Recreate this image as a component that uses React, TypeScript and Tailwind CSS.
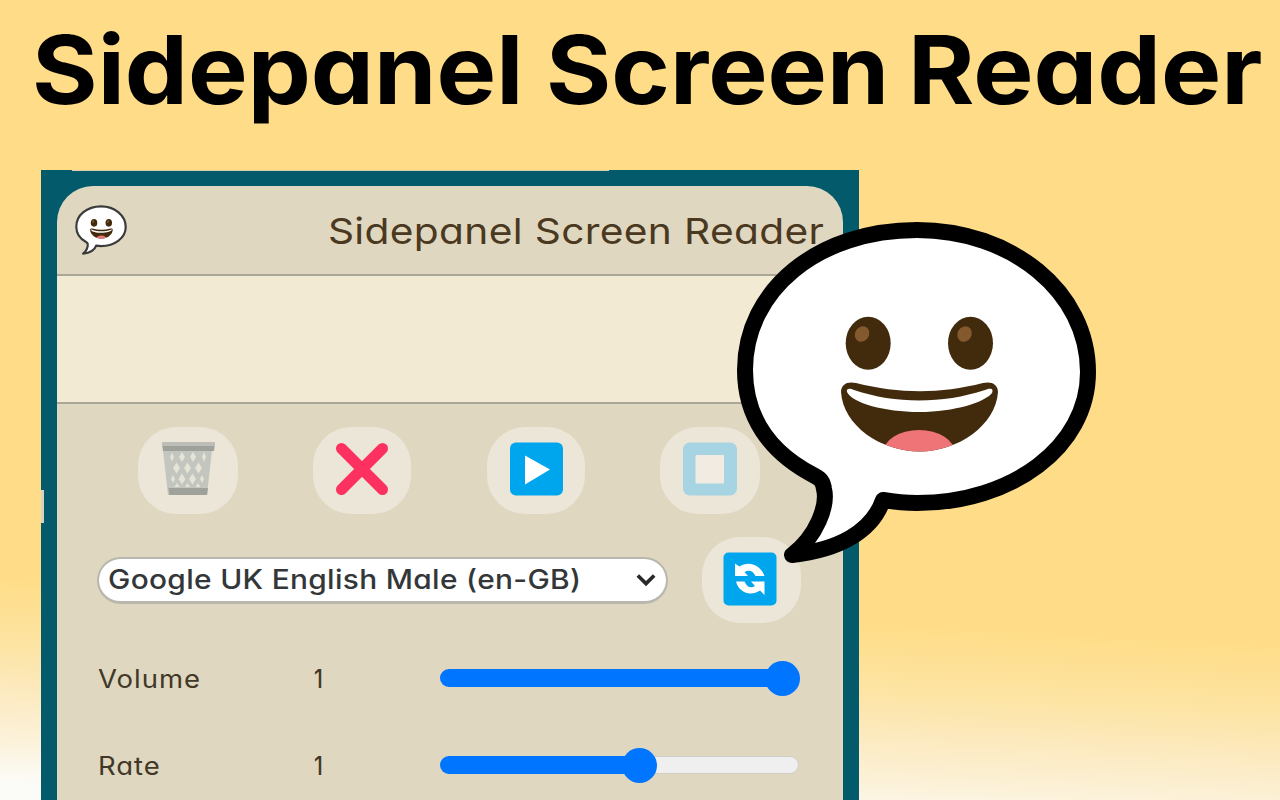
import React from "react";

function SpeechBubble({
  className,
  id,
  stroke = "#000",
  strokeWidth = 16,
}: {
  className: string;
  id: string;
  stroke?: string;
  strokeWidth?: number;
}) {
  const mouth =
    "M841 392C841 384 848 381 856 383C900 394 940 394 983 383C991 381 998 384 998 392C996 425 958 451.500 920 451.500C880 451.500 843 425 841 392Z";
  return (
    <svg className={className} viewBox="736 221 361 343" preserveAspectRatio="none" aria-hidden="true">
      <defs>
        <clipPath id={id}>
          <path d={mouth} />
        </clipPath>
      </defs>
      <path
        d="M745 370C745 290 818 230 917 230C1012 230 1088 292 1088 372C1088 447 1012 503 917 503C906 503 895 502 883 500C872 532 838 550 792 555C817 536 828 505 824 489C823 482 821 479 815 476C768 452 745 415 745 370Z"
        fill="#fff"
        stroke={stroke}
        strokeWidth={strokeWidth}
        strokeLinejoin="round"
      />
      <ellipse cx="868.200" cy="343.200" rx="22.500" ry="26.500" fill="#422b0d" />
      <ellipse cx="970.500" cy="343.200" rx="22.500" ry="26.500" fill="#422b0d" />
      <ellipse cx="862" cy="334" rx="7" ry="8" fill="#85592e" transform="rotate(30 862 334)" />
      <ellipse cx="964.500" cy="334" rx="7" ry="8" fill="#85592e" transform="rotate(30 964.500 334)" />
      <path d={mouth} fill="#422b0d" />
      <path
        d="M847 392C846 388 850 388 854 390C896 404 942 404 985 390C990 388 994 388 992 393C985 402 955 412 919 412C885 412 852 403 847 392Z"
        fill="#fff"
      />
      <ellipse cx="919" cy="453" rx="36" ry="23" fill="#ef7478" clipPath={`url(#${id})`} />
    </svg>
  );
}

function TrashIcon() {
  return (
    <svg className="h-[54px] w-[54px]" viewBox="0 0 54 54" aria-hidden="true">
      <path d="M2 8H51L46 53H7Z" fill="#c3c5bf" />
      <g fill="#e6e3d7">
        <path d="M11 10.500L13 15L11 19.500L9 15Z" />
        <path d="M21 10L24 15L21 20L18 15Z" />
        <path d="M32 10L35 15L32 20L29 15Z" />
        <path d="M43 10L45 15L43 20L41 15Z" />
        <path d="M15.500 20.500L19 26L15.500 31.500L12 26Z" />
        <path d="M26.500 20.500L30 26L26.500 31.500L23 26Z" />
        <path d="M37.500 20.500L41 26L37.500 31.500L34 26Z" />
        <path d="M21 31.500L24.500 37L21 42.500L17.500 37Z" />
        <path d="M31.500 31.500L35 37L31.500 42.500L28 37Z" />
        <path d="M41 33L43 37L41 41L39 37Z" />
        <path d="M12 33L14 37L12 41L10 37Z" />
        <path d="M16 41L18.500 45H13.500Z" />
        <path d="M26.500 41L29 45H24Z" />
        <path d="M37 41L39.500 45H34.500Z" />
      </g>
      <path d="M1 1H54L53 9H2Z" fill="#9fa19b" />
      <path d="M1 0H54V4H1Z" fill="#bcbeb7" />
      <path d="M7.500 46H47L46 53H8.500Z" fill="#9fa19b" />
    </svg>
  );
}

function CrossIcon() {
  return (
    <svg className="h-[54px] w-[54px]" viewBox="0 0 54 54" aria-hidden="true">
      <path d="M6.500 6.500L47.500 47.500M47.500 6.500L6.500 47.500" stroke="#fc3160" strokeWidth="11" strokeLinecap="round" />
    </svg>
  );
}

function PlayIcon() {
  return (
    <svg className="h-[54px] w-[54px]" viewBox="0 0 54 54" aria-hidden="true">
      <rect x="1" y="0.500" width="53" height="53" rx="6" fill="#00a6ed" />
      <path d="M16 13.500L41 27.500L16 42.500Z" fill="#fff" />
    </svg>
  );
}

function StopIcon() {
  return (
    <svg className="h-[54px] w-[54px]" viewBox="0 0 54 54" aria-hidden="true">
      <rect x="0" y="0.500" width="54" height="53" rx="7" fill="#a6d4e2" />
      <rect x="12.500" y="13" width="28.500" height="28.500" rx="1" fill="#f2ebe1" />
    </svg>
  );
}

function RefreshIcon() {
  return (
    <svg className="mr-[3px] mb-[2px] h-[54px] w-[54px]" viewBox="0 0 54 54" aria-hidden="true">
      <rect x="0.500" y="0.500" width="53" height="53" rx="5" fill="#00a6ed" />
      <path
        d="M12 11.500L16.500 14.500C25 9 37 12 41.500 24H32.500C30 18.500 26 17.500 21.500 20L25 24H12Z"
        fill="#fff"
      />
      <path
        d="M41.500 43L37 38.500C28 44.500 16 41 13 29.500H21.500C24 35.500 28 36.500 32 34L28 29.500H41.500Z"
        fill="#fff"
      />
    </svg>
  );
}

function IconButton({ children, label, className }: { children: React.ReactNode; label: string; className: string }) {
  return (
    <button aria-label={label} className={`flex items-center justify-center rounded-[38px] bg-[#ece6d9] ${className}`}>
      {children}
    </button>
  );
}

function SliderRow({ label, value, percent }: { label: string; value: string; percent: number }) {
  return (
    <div className="flex h-[87px] items-center pl-[41px] text-[25px] text-[#42382a]">
      <span className="w-[216px] pt-[4px]">
        <span className="inline-block origin-left scale-x-110 tracking-[0.9px]">{label}</span>
      </span>
      <span className="w-[126px] pt-[4px] font-medium">
        <span className="inline-block origin-left scale-x-[0.85]">{value}</span>
      </span>
      <div className="relative h-[18px] w-[359px] rounded-full border border-[#cfcdc5] bg-[#efefef]">
        <div className="absolute -inset-y-px -left-px rounded-full bg-[#0075ff]" style={{ width: percent }} />
        <div className="absolute -top-[9px] h-[35px] w-[35px] rounded-full bg-[#0075ff]" style={{ left: percent - 35 }} />
      </div>
    </div>
  );
}

export default function App() {
  return (
    <main className="relative flex h-[800px] w-[1280px] flex-col overflow-hidden bg-[linear-gradient(183deg,#ffdd88_74.500%,#fde4a3_82%,#fce9bd_87%,#fcf2da_93%,#fbfbf7_98%)] font-['Inter',sans-serif] [font-feature-settings:'cv11'_1]">
      <h1 className="flex h-[170px] shrink-0 pt-[13px] pl-[32px] text-[95px] leading-[114px] font-bold whitespace-nowrap text-black">
        <span className="w-[514px]">
          <span className="inline-block origin-left scale-x-[1.055]">Sidepanel</span>
        </span>
        <span className="w-[362px]">
          <span className="inline-block origin-left scale-x-[1.05]">Screen</span>
        </span>
        <span className="inline-block origin-left scale-x-[1.065]">Reader</span>
      </h1>

      <section className="relative ml-[41px] h-[630px] w-[818px] bg-[#025a6b] px-[16px] pt-[16px]">
        <div className="absolute top-0 left-[31px] h-px w-[537px] bg-[#d5cfae]" />
        <div className="absolute top-[320px] left-0 h-[33px] w-[3px] bg-[#d9d2c4]" />
        <div className="flex h-[614px] w-[786px] flex-col overflow-hidden rounded-t-[36px] bg-[#dfd7bf]">
          <header className="flex h-[90px] shrink-0 items-center justify-between border-b-2 border-[#aaa698] pr-[19px] pl-[18px]">
            <SpeechBubble id="mouth-small" className="h-[50px] w-[52px]" stroke="#3b3b3b" strokeWidth={15} />
            <h2 className="origin-right scale-x-[1.13] pt-[2px] text-[36px] tracking-[0.3px] whitespace-nowrap text-[#4b3820]">
              Sidepanel Screen Reader
            </h2>
          </header>
          <div className="h-[128px] shrink-0 border-b-2 border-[#aaa698] bg-[#f2ead3]" />

          <div className="flex shrink-0 pt-[23px] pl-[81px]">
            <IconButton label="Clear" className="mr-[75px] h-[87px] w-[100px] pb-[3px]">
              <TrashIcon />
            </IconButton>
            <IconButton label="Cancel" className="mr-[76px] h-[87px] w-[98px] pb-[3px]">
              <CrossIcon />
            </IconButton>
            <IconButton label="Play" className="mr-[75px] h-[87px] w-[98px] pb-[3px]">
              <PlayIcon />
            </IconButton>
            <IconButton label="Stop" className="h-[87px] w-[100px] pb-[3px]">
              <StopIcon />
            </IconButton>
          </div>

          <div className="mt-[23px] flex shrink-0 items-center pl-[40px]">
            <div className="flex h-[47px] w-[571px] items-center justify-between rounded-full border-2 border-b-[3px] border-[#b9b7ae] bg-white pr-[10px] pl-[9px]">
              <span className="origin-left scale-x-[1.105] pt-px text-[27px] font-medium tracking-[0.3px] whitespace-nowrap text-[#33373a]">
                Google UK English Male (en-GB)
              </span>
              <svg className="h-[16px] w-[20px]" viewBox="0 0 22 16" aria-hidden="true">
                <path d="M2 3L11 12L20 3" fill="none" stroke="#292929" strokeWidth="4" />
              </svg>
            </div>
            <IconButton label="Refresh voices" className="ml-[34px] h-[86px] w-[99px]">
              <RefreshIcon />
            </IconButton>
          </div>

          <div className="mt-[11px] shrink-0">
            <SliderRow label="Volume" value="1" percent={359} />
            <SliderRow label="Rate" value="1" percent={216} />
          </div>
        </div>
      </section>

      <SpeechBubble id="mouth-large" className="absolute top-[221px] left-[736px] h-[343px] w-[361px]" />
    </main>
  );
}
